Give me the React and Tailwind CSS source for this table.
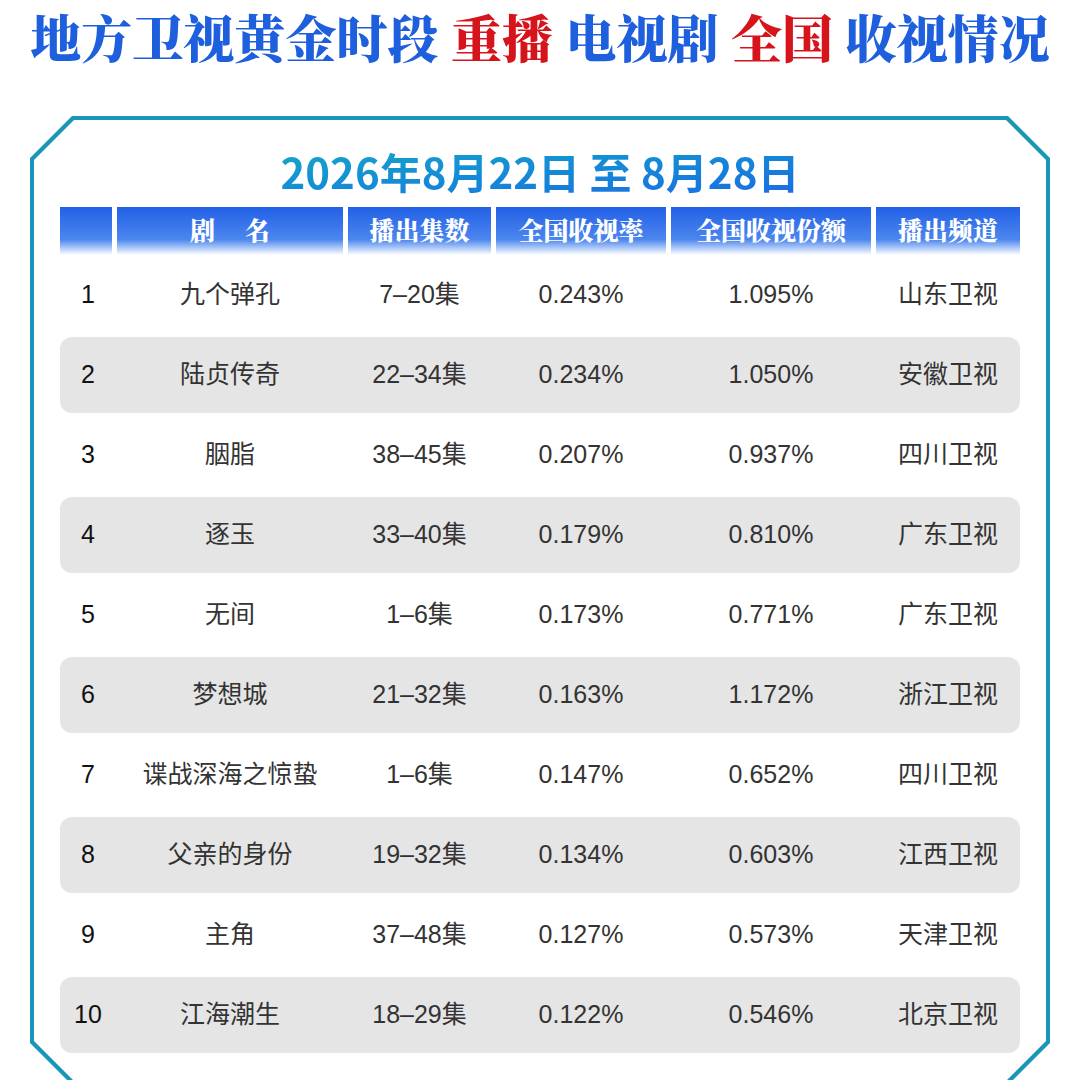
const rows = [
  ["1", "九个弹孔", "7–20集", "0.243%", "1.095%", "山东卫视"],
  ["2", "陆贞传奇", "22–34集", "0.234%", "1.050%", "安徽卫视"],
  ["3", "胭脂", "38–45集", "0.207%", "0.937%", "四川卫视"],
  ["4", "逐玉", "33–40集", "0.179%", "0.810%", "广东卫视"],
  ["5", "无间", "1–6集", "0.173%", "0.771%", "广东卫视"],
  ["6", "梦想城", "21–32集", "0.163%", "1.172%", "浙江卫视"],
  ["7", "谍战深海之惊蛰", "1–6集", "0.147%", "0.652%", "四川卫视"],
  ["8", "父亲的身份", "19–32集", "0.134%", "0.603%", "江西卫视"],
  ["9", "主角", "37–48集", "0.127%", "0.573%", "天津卫视"],
  ["10", "江海潮生", "18–29集", "0.122%", "0.546%", "北京卫视"],
]

const headers = ["", "剧名", "播出集数", "全国收视率", "全国收视份额", "播出频道"]

const serif = "font-['Noto_Serif_CJK_SC','Source_Han_Serif_SC','Noto_Sans_CJK_SC',serif]"
const cols = "grid grid-cols-[52px_226px_143px_170px_200px_144px] gap-x-[5px]"

export default function App() {
  return (
    <div className="w-[1080px] h-[1080px] overflow-hidden bg-white flex flex-col">

      {/* Title */}
      <div className={`shrink-0 h-[72px] flex items-center justify-center text-[51px] font-black leading-[72px] whitespace-pre text-[#1d5fdc] ${serif}`}>
        <span>地方卫视黄金时段 </span>
        <span className="text-[#d6141b]">重播</span>
        <span> 电视剧 </span>
        <span className="text-[#d6141b]">全国</span>
        <span> 收视情况</span>
      </div>

      {/* Frame */}
      <div className="shrink-0 mx-[30px] mt-[44px] p-[4px] bg-[#1a97b8] [clip-path:polygon(42px_0,calc(100%_-_42px)_0,100%_42px,100%_calc(100%_-_42px),calc(100%_-_42px)_100%,42px_100%,0_calc(100%_-_42px),0_42px)]">
        <div className="bg-white px-[26px] pt-[30px] pb-[26px] [clip-path:polygon(40px_0,calc(100%_-_40px)_0,100%_40px,100%_calc(100%_-_40px),calc(100%_-_40px)_100%,40px_100%,0_calc(100%_-_40px),0_40px)]">

          {/* Date range */}
          <div className="h-[42px] flex justify-center items-center">
            <span className="text-[42px] leading-[1.2] font-bold whitespace-pre font-['Noto_Sans_CJK_SC',sans-serif] bg-gradient-to-br from-[#1aa6c9] to-[#1d6be2] bg-clip-text text-transparent">
              2026年8月22日 至 8月28日
            </span>
          </div>

          {/* Header */}
          <div className={`${cols} mt-[15px] h-[48px]`}>
            {headers.map((h, i) => (
              <div
                key={i}
                className={`flex items-center justify-center gap-[30px] pb-[2px] text-[25px] font-black text-white whitespace-pre bg-[linear-gradient(to_bottom,#2260e6_0%,#4c87ee_68%,#ffffff_100%)] ${serif}`}
              >
                {h === "剧名" ? (
                  <>
                    <span>剧</span>
                    <span>名</span>
                  </>
                ) : (
                  h
                )}
              </div>
            ))}
          </div>

          {/* Rows */}
          <div className="flex flex-col font-['Liberation_Sans','Noto_Sans_CJK_SC',sans-serif] text-[25px] text-[#333]">
            {rows.map((r, i) => (
              <div key={r[0]} className="h-[80px] py-[2px]">
                <div className={`${cols} h-full items-center rounded-[12px] ${i % 2 === 1 ? "bg-[#e5e5e5]" : ""}`}>
                  <div className="text-center text-[#111] pl-[4px]">{r[0]}</div>
                  <div className="text-center">{r[1]}</div>
                  <div className="text-center">{r[2]}</div>
                  <div className="text-center">{r[3]}</div>
                  <div className="text-center">{r[4]}</div>
                  <div className="text-center">{r[5]}</div>
                </div>
              </div>
            ))}
          </div>

        </div>
      </div>
    </div>
  )
}
